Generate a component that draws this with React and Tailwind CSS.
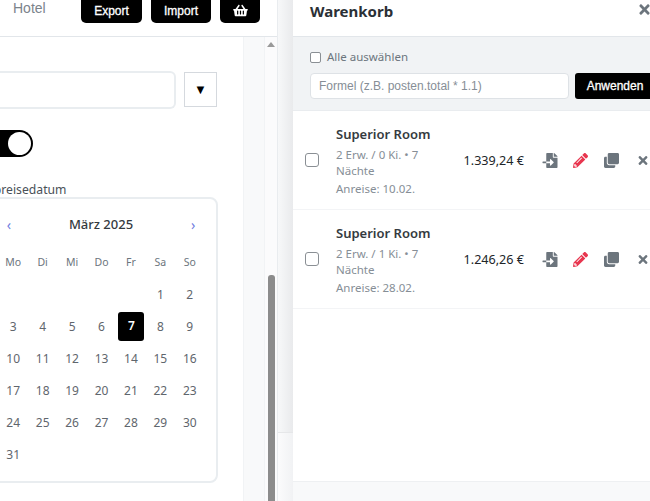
import React from "react";
import { FaShoppingBasket, FaFileImport, FaPencilAlt, FaClone, FaTimes } from "react-icons/fa";

const sans = "font-['Liberation_Sans',Arial,sans-serif]";
const noto = "font-['Noto_Sans','Open_Sans',sans-serif]";

const weeks = [
  ["", "", "", "", "", "1", "2"],
  ["3", "4", "5", "6", "7", "8", "9"],
  ["10", "11", "12", "13", "14", "15", "16"],
  ["17", "18", "19", "20", "21", "22", "23"],
  ["24", "25", "26", "27", "28", "29", "30"],
  ["31", "", "", "", "", "", ""],
];

function CartItem({ kids, price, date }) {
  return (
    <div className="flex items-center h-[99px] border-b border-[#f3f4f6] pl-[12px] shrink-0">
      <span className="w-[14px] h-[14px] border border-[#8a8f94] rounded-[3px] bg-white shrink-0" />
      <div className="w-[103px] ml-[17px] shrink-0">
        <div className="text-[13px] leading-[20px] font-semibold text-[#343a40] mt-[1px]">Superior Room</div>
        <div className="text-[11.5px] leading-[16px] text-[#868e96] mt-[3px]">2 Erw. / {kids} Ki. • 7 Nächte</div>
        <div className="text-[11.5px] leading-[17px] text-[#868e96] mt-[1px]">Anreise: {date}</div>
      </div>
      <div className="w-[78px] ml-[7px] mt-[2px] text-right text-[12.6px] text-[#212529] shrink-0">{price}</div>
      <div className="flex items-center ml-[18px] text-[#6c757d] shrink-0">
        <FaFileImport className="w-[16px] h-[15px]" />
        <FaPencilAlt className="w-[15px] h-[15px] ml-[15px] text-[#e8364f]" />
        <FaClone className="w-[15px] h-[15px] ml-[16px]" />
        <FaTimes className="w-[12px] h-[13px] ml-[18px]" />
      </div>
    </div>
  );
}

export default function App() {
  return (
    <div className={`flex w-[650px] h-[501px] overflow-hidden bg-white ${noto}`}>
      <div className="w-[278px] shrink-0 flex flex-col border-r border-[#e9ecef] overflow-hidden">
        <header className="flex h-[37px] shrink-0 border-b border-[#e2e6ea] pl-[13px]">
          <span className={`${sans} text-[14px] leading-[16px] text-[#7b838b] w-[68px] shrink-0`}>Hotel</span>
          <div className={`${sans} flex gap-[9px] h-[23px] text-[12px] text-white [-webkit-text-stroke:0.3px_white]`}>
            <div className="w-[61px] h-full bg-black rounded-b-[5px] flex items-center justify-center pb-[1px]">Export</div>
            <div className="w-[60px] h-full bg-black rounded-b-[5px] flex items-center justify-center pb-[1px]">Import</div>
            <div className="w-[40px] h-full bg-black rounded-b-[5px] flex items-center justify-center pb-[2px]">
              <FaShoppingBasket className="w-[15px] h-[13px]" />
            </div>
          </div>
        </header>
        <div className="flex flex-1 min-h-0">
          <main className="w-[243px] shrink-0 pt-[34px]">
            <div className="flex w-[217px] items-start">
              <div className="w-[176px] h-[38px] border-2 border-l-0 border-[#e9edf0] rounded-r-[6px] shrink-0" />
              <div className="w-[33px] h-[35px] ml-[8px] mt-[1px] border border-[#d5d9de] flex items-center justify-center text-[13px] text-black shrink-0">▼</div>
            </div>
            <div className="h-[27px] w-[33px] mt-[21px] bg-black rounded-r-full flex items-center justify-end pr-[2px]">
              <span className="w-[23px] h-[23px] bg-white rounded-full" />
            </div>
            <div className="text-[12.2px] leading-[17px] text-[#495057] mt-[24px] -ml-[14px] w-[110px] whitespace-nowrap">Abreisedatum</div>
            <section className="w-[238px] h-[286px] -ml-[20px] -mt-[1px] border-2 border-[#e9edf0] rounded-[8px] pl-[16px] pr-[12px] pt-[14px]">
              <div className="flex items-center h-[24px]">
                <span className="w-[13px] text-right text-[#6f7de0] text-[14px] leading-[24px]">‹</span>
                <span className="flex-1 text-center text-[13px] text-[#343a40] font-medium">März 2025</span>
                <span className="w-[13px] text-[#6f7de0] text-[14px] leading-[24px]">›</span>
              </div>
              <div className="grid grid-cols-7 mt-[14px] h-[24px] items-center text-center text-[10.5px] text-[#6c757d] translate-x-[0.5px]">
                {["Mo", "Di", "Mi", "Do", "Fr", "Sa", "So"].map((d) => (
                  <span key={d}>{d}</span>
                ))}
              </div>
              <div className="grid grid-cols-7 auto-rows-[32px] mt-[4px] text-center text-[12px] text-[#5f666d] translate-x-[0.5px]">
                {weeks.flat().map((d, i) => (
                  <div key={i} className="flex items-center justify-center">
                    {d === "7" ? (
                      <span className="w-[26px] h-[29px] bg-black text-white font-semibold rounded-[3px] flex items-center justify-center translate-x-[0.5px] -translate-y-[1px]">7</span>
                    ) : (
                      d
                    )}
                  </div>
                ))}
              </div>
            </section>
          </main>
          <div className="w-[21px] shrink-0 bg-[#f8f9fa] border-l border-[#f1f3f5]" />
          <div className="flex-1 flex flex-col items-center border-l border-[#f1f3f5] bg-[#fbfbfc]">
            <div className="mt-[5px] w-0 h-0 border-x-[4.5px] border-x-transparent border-b-[5px] border-b-[#9a9a9a]" />
            <div className="w-[7px] h-[225px] mt-[228px] bg-[#8c8c8c] rounded-t-[3px] flex-1" />
          </div>
        </div>
      </div>
      <div className="w-[15px] shrink-0 flex flex-col">
        <div className="h-[433px] bg-gradient-to-r from-[#f7f8f9] to-[#e9eaec] border-b border-[#e6e7e9]" />
        <div className="flex-1 bg-gradient-to-r from-[#fbfbfc] to-[#f1f2f4]" />
      </div>
      <aside className="w-[400px] shrink-0 flex flex-col bg-white">
        <div className="h-[37px] shrink-0 flex items-start border-b border-[#e2e6ea] pl-[17px]">
          <h2 className="text-[15px] leading-[22px] font-bold text-[#2b3035] w-[328px]">Warenkorb</h2>
          <FaTimes className="w-[13px] h-[15px] mt-[2px] text-[#6c757d]" />
        </div>
        <div className="h-[74px] shrink-0 bg-[#f1f3f5] border-b border-[#e9ecef] px-[17px] pt-[12px]">
          <div className="flex items-center h-[16px]">
            <span className="w-[11px] h-[11px] border border-[#8a8f94] rounded-[2px] bg-white" />
            <span className="ml-[6px] text-[11.5px] text-[#6c757d]">Alle auswählen</span>
          </div>
          <div className="flex mt-[8px]">
            <div className={`${sans} w-[259px] h-[26px] bg-white border border-[#dee2e6] rounded-[4px] px-[8px] text-[12px] leading-[24px] text-[#868e96] shrink-0`}>
              Formel (z.B. posten.total * 1.1)
            </div>
            <div className={`${sans} w-[80px] h-[26px] ml-[6px] bg-black text-white rounded-[3px] text-[12px] [-webkit-text-stroke:0.3px_white] flex items-center justify-center shrink-0`}>
              Anwenden
            </div>
          </div>
        </div>
        <CartItem kids="0" price="1.339,24 €" date="10.02." />
        <CartItem kids="1" price="1.246,26 €" date="28.02." />
        <div className="flex-1" />
        <div className="h-[20px] shrink-0 bg-[#f8f9fa] border-t border-[#eef0f2]" />
      </aside>
    </div>
  );
}
